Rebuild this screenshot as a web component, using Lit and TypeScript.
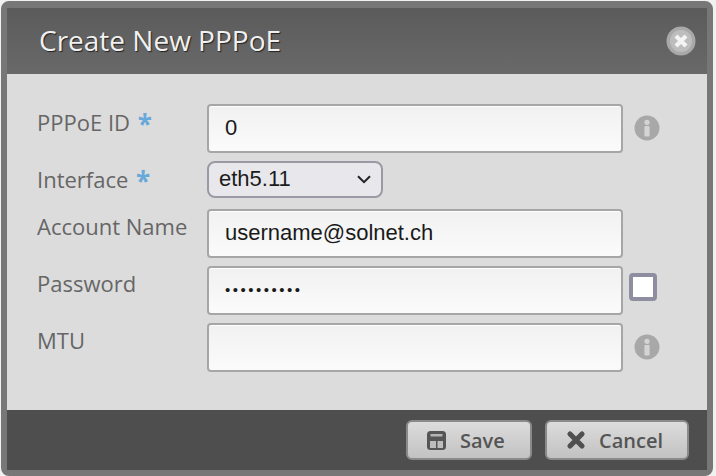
import { LitElement, html, css } from "lit";
import { customElement } from "lit/decorators.js";

const info = html`<svg class="info" width="26" height="26" viewBox="0 0 26 26"><circle cx="13" cy="13" r="12.5" fill="#a8a8a8"/><circle cx="13" cy="7.3" r="2.6" fill="#d4d4d4"/><rect x="10.4" y="11" width="5.2" height="10.5" rx="1" fill="#d4d4d4"/></svg>`;

@customElement("app-root")
export class AppRoot extends LitElement {
  static styles = css`
    :host { display: block; width: 716px; height: 476px; background: #f1f1f1; font-family: "Open Sans", sans-serif; overflow: hidden; }
    .page { height: 476px; padding: 1px 3px 0 1px; box-sizing: border-box; }
    .modal { height: 475px; box-sizing: border-box; border: 6px solid #777; border-top-width: 7px; border-radius: 8px; display: flex; flex-direction: column; background: #dcdcdc; }
    .header { height: 66px; flex: none; box-sizing: border-box; padding: 0 11px 2px 32px; display: flex; align-items: center; justify-content: space-between; background: linear-gradient(#5b5b5b, #696969); }
    .title { font-size: 28px; color: #f0f0f0; text-shadow: 1px 1px 1px #222; line-height: 36px; }
    .close { width: 30px; height: 30px; margin-top: 1px; display: block; }
    .body { flex: 1; padding: 30px 0 0 30px; display: flex; flex-direction: column; }
    .row { display: grid; grid-template-columns: 170px 416px auto; align-items: start; }
    .r1 { height: 57px; }
    .r2 { height: 48px; }
    .r3 { height: 57px; }
    .r4 { height: 57px; }
    .label { font-size: 22px; line-height: 28px; color: #666; padding-top: 4px; white-space: nowrap; }
    .r3 .label, .r4 .label, .r5 .label { padding-top: 3px; }
    .star { color: #68a8db; font-size: 26px; font-weight: 700; line-height: 20px; margin-left: 2px; display: inline-block; position: relative; top: 3px; }
    .input { height: 49px; box-sizing: border-box; border: 2px solid #a6a6a6; border-radius: 4px; background: linear-gradient(#f1f1f1, #fbfbfb); box-shadow: inset 0 1px 0 #fff; padding: 0 16px; font: 22px/43px "Liberation Sans", Arial, sans-serif; color: #1a1a1a; }
    .input.pw { font-size: 15px; letter-spacing: 2.5px; line-height: 43px; }
    .select { width: 176px; height: 37px; box-sizing: border-box; border: 2px solid #9a9aa4; border-radius: 8px; background: #e8e8ec; display: flex; align-items: center; justify-content: space-between; padding: 0 10px 1px 10px; font: 22px "Liberation Sans", Arial, sans-serif; color: #1c1c1c; }
    .select svg { margin-top: 1px; }
    .aside { padding-left: 11px; }
    .info { display: block; margin-top: 11px; }
    .check { width: 28px; height: 28px; box-sizing: border-box; border: 4px solid #8f8ea0; border-radius: 4px; background: #fff; margin: 7px 0 0 6px; }
    .footer { height: 60px; flex: none; box-sizing: border-box; background: #4e4e4e; display: flex; justify-content: flex-end; align-items: flex-start; gap: 13px; padding: 10px 18px 0 0; }
    .btn { height: 40px; box-sizing: border-box; border: 2px solid #8a8a8a; border-radius: 6px; background: linear-gradient(#dcdcdc, #c2c2c2); color: #555; font-size: 20px; font-weight: 600; display: flex; align-items: center; padding: 0 0 0 19px; gap: 14px; }
    .save { width: 126px; }
    .cancel { width: 144px; gap: 13px; }
    .btn svg { display: block; flex: none; }
  `;

  render() {
    return html`<div class="page"><div class="modal">
      <div class="header">
        <div class="title">Create New PPPoE</div>
        <svg class="close" viewBox="0 0 30 30"><circle cx="15" cy="15" r="14.5" fill="#a9a9a9"/><circle cx="15" cy="15" r="11" fill="#bdbdbd"/><path d="M10 10 L20 20 M20 10 L10 20" stroke="#f4f4f4" stroke-width="4.2" fill="none"/></svg>
      </div>
      <div class="body">
        <div class="row r1"><div class="label">PPPoE ID <span class="star">*</span></div><div class="input">0</div><div class="aside">${info}</div></div>
        <div class="row r2"><div class="label">Interface <span class="star">*</span></div>
          <div class="select-wrap"><div class="select"><span>eth5.11</span><svg width="14" height="9" viewBox="0 0 14 9"><path d="M1 1.2 L7 7.2 L13 1.2" fill="none" stroke="#222" stroke-width="2"/></svg></div></div></div>
        <div class="row r3"><div class="label">Account Name</div><div class="input">username@solnet.ch</div></div>
        <div class="row r4"><div class="label">Password</div><div class="input pw">••••••••••</div><div class="check"></div></div>
        <div class="row r5"><div class="label">MTU</div><div class="input"></div><div class="aside">${info}</div></div>
      </div>
      <div class="footer">
        <div class="btn save"><svg width="19" height="19" viewBox="0 0 19 19"><rect width="19" height="19" rx="3.5" fill="#555"/><rect x="3.5" y="3" width="12" height="2.5" fill="#b4b4b4"/><rect x="3" y="10" width="13" height="7" fill="#bdbdbd"/><rect x="9" y="10" width="1.5" height="7" fill="#555"/></svg><span>Save</span></div>
        <div class="btn cancel"><svg width="20" height="20" viewBox="0 0 20 20"><path d="M4 4 L16 16 M16 4 L4 16" stroke="#505050" stroke-width="5.2" stroke-linecap="round"/></svg><span>Cancel</span></div>
      </div>
    </div></div>`;
  }
}
